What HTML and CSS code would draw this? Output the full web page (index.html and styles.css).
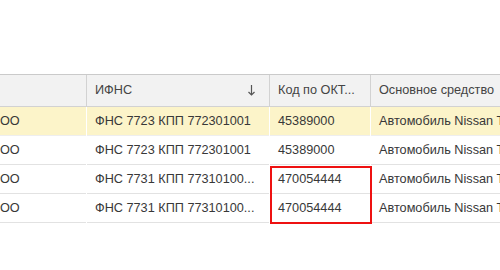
FILE: index.html
```html
<!DOCTYPE html>
<html>
<head>
<meta charset="utf-8">
<link rel="stylesheet" href="styles.css">
</head>
<body>
<div class="page">
  <div class="table">
    <div class="row head">
      <div class="cell"></div>
      <div class="cell sort">ИФНС <span class="arrow"><svg width="7" height="11" viewBox="0 0 7 11"><path d="M3.5 0V10M0.5 7L3.5 10L6.5 7" fill="none" stroke="#555" stroke-width="1.2"/></svg></span></div>
      <div class="cell">Код по ОКТ...</div>
      <div class="cell">Основное средство</div>
    </div>
    <div class="row sel">
      <div class="cell first">ОО</div>
      <div class="cell">ФНС 7723 КПП 772301001</div>
      <div class="cell">45389000</div>
      <div class="cell">Автомобиль Nissan Teana</div>
    </div>
    <div class="row">
      <div class="cell first">ОО</div>
      <div class="cell">ФНС 7723 КПП 772301001</div>
      <div class="cell">45389000</div>
      <div class="cell">Автомобиль Nissan Teana</div>
    </div>
    <div class="row">
      <div class="cell first">ОО</div>
      <div class="cell">ФНС 7731 КПП 77310100...</div>
      <div class="cell">470054444</div>
      <div class="cell">Автомобиль Nissan Teana</div>
    </div>
    <div class="row">
      <div class="cell first">ОО</div>
      <div class="cell">ФНС 7731 КПП 77310100...</div>
      <div class="cell">470054444</div>
      <div class="cell">Автомобиль Nissan Teana</div>
    </div>
    <div class="mark"></div>
  </div>
</div>
</body>
</html>
```
FILE: styles.css
```css
html, body {
  margin: 0;
  padding: 0;
  background: #fff;
}
.page {
  width: 500px;
  height: 270px;
  overflow: hidden;
  padding-top: 74px;
  box-sizing: border-box;
  font-family: "Liberation Sans", Arial, sans-serif;
  font-size: 12.7px;
  color: #383838;
}
.table {
  position: relative;
  width: 560px;
}
.row {
  display: grid;
  grid-template-columns: 86px 182px 100px 1fr;
  column-gap: 1px;
  background: #fff;
}
.row .cell {
  height: 28px;
  line-height: 28px;
  padding-left: 8px;
  white-space: nowrap;
  overflow: hidden;
  border-bottom: 1px solid #e2e2e2;
}
.row .cell.first {
  padding-left: 0;
}
.row.head {
  background: #d2d2d2;
  border-top: 1px solid #cacaca;
}
.row.head .cell {
  background: #f2f2f2;
  height: 31px;
  line-height: 31px;
  border-bottom: 1px solid #d2d2d2;
  color: #444;
}
.sort {
  display: flex;
  justify-content: space-between;
  padding-right: 14px;
}
.arrow {
  display: flex;
  align-items: center;
}
.row.sel .cell {
  background: #fcf4c9;
  border-bottom-color: #eeeeee;
}
.mark {
  position: absolute;
  left: 270px;
  top: 92px;
  width: 98px;
  height: 54px;
  border: 2px solid #ee1111;
}
```
